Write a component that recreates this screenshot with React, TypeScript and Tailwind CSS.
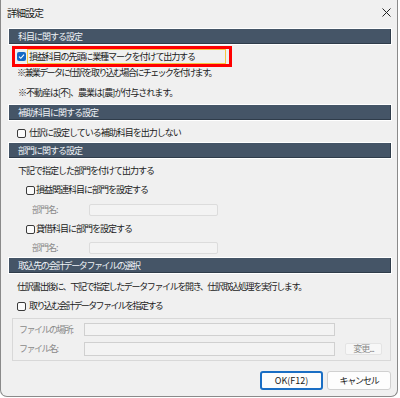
import React from "react";

function Header({ title, tight }: { title: string; tight?: boolean }) {
  return (
    <div
      className={
        "ml-[7px] w-[384px] h-[17px] border border-white bg-[#455567] shadow-[inset_-1px_-1px_0_#2f3c4a] flex items-center pl-[9px] text-[#eef2f6] text-[9px] leading-[12px] " +
        (tight ? "tracking-[-1.4px]" : "tracking-[-1px]")
      }
    >
      {title}
    </div>
  );
}

function Box({ checked }: { checked?: boolean }) {
  if (checked) {
    return (
      <div className="w-[9px] h-[9px] rounded-[2px] bg-[#1668c4] flex items-center justify-center shrink-0">
        <svg width="7" height="7" viewBox="0 0 7 7">
          <path d="M1 3.6 L2.8 5.3 L6 1.6" stroke="white" strokeWidth="1.1" fill="none" />
        </svg>
      </div>
    );
  }
  return <div className="w-[9px] h-[9px] rounded-[2px] border border-[#3a3a3a] bg-[#fbfbfb] shrink-0" />;
}

export default function App() {
  return (
    <div className="w-[400px] h-[398px] bg-white font-['Noto_Sans_CJK_JP',sans-serif] text-[#1a1a1a]">
      <div className="w-[398px] h-[397px] bg-[#f0f0f0] border-l border-r border-b border-[#8a8a8a] rounded-b-[7px] flex flex-col">
        {/* title */}
        <div className="h-[25px] flex items-center justify-between pl-[6px] pr-[5px]">
          <span className="text-[10px] tracking-[-1px] leading-[12px] text-[#1a1a1a]">詳細設定</span>
          <svg width="9" height="9" viewBox="0 0 9 9" className="mr-[1px]">
            <path d="M0.5 0.5 L8.5 8.5 M8.5 0.5 L0.5 8.5" stroke="#222" strokeWidth="1" />
          </svg>
        </div>

        <div className="mt-[3px]">
          <Header title="科目に関する設定" />
        </div>

        {/* red highlight */}
        <div className="mt-[1px] ml-[11px] w-[220px] h-[21px] border-[3px] border-[#ff0000] flex items-center pl-[2px]">
          <Box checked />
          <div className="ml-[1px] w-[199px] h-[15px] border border-[#f5c542] flex items-center pl-[1px] text-[9px] tracking-[-1.1px] leading-[12px]">
            損益科目の先頭に業種マークを付けて出力する
          </div>
        </div>

        <div className="h-[12px] ml-[16px] flex items-center text-[9px] tracking-[-1.6px] leading-[12px]">
          ※兼業データに仕訳を取り込む場合にチェックを付けます。
        </div>
        <div className="mt-[8px] h-[12px] ml-[17px] flex items-center text-[9px] tracking-[-1px] leading-[12px]">
          ※不動産は[不]、農業は[農]が付与されます。
        </div>

        <div className="mt-[5px]">
          <Header title="補助科目に関する設定" />
        </div>
        <div className="mt-[5px] h-[14px] ml-[16px] flex items-center gap-[3px] text-[9px] tracking-[-1px] leading-[12px]">
          <Box />
          <span>仕訳に設定している補助科目を出力しない</span>
        </div>

        <div className="mt-[2px]">
          <Header title="部門に関する設定" />
        </div>
        <div className="mt-[5px] h-[14px] ml-[17px] flex items-center text-[9px] tracking-[-1px] leading-[12px]">
          下記で指定した部門を付けて出力する
        </div>
        <div className="mt-[5px] h-[14px] ml-[25px] flex items-center gap-[1px] text-[9px] tracking-[-1px] leading-[12px]">
          <Box />
          <span>損益関連科目に部門を設定する</span>
        </div>
        <div className="mt-[6px] h-[14px] ml-[31px] flex items-center text-[9px] tracking-[-1px] leading-[12px]">
          <span className="w-[57px] text-[#8a8a8a]">部門名:</span>
          <div className="w-[129px] h-[12px] border border-[#dcdcdc] rounded-[2px] bg-[#f3f3f3]" />
        </div>
        <div className="mt-[5px] h-[14px] ml-[25px] flex items-center gap-[1px] text-[9px] tracking-[-1px] leading-[12px]">
          <Box />
          <span>貸借科目に部門を設定する</span>
        </div>
        <div className="mt-[5px] h-[14px] ml-[31px] flex items-center text-[9px] tracking-[-1px] leading-[12px]">
          <span className="w-[57px] text-[#8a8a8a]">部門名:</span>
          <div className="w-[129px] h-[12px] border border-[#dcdcdc] rounded-[2px] bg-[#f3f3f3]" />
        </div>

        <div className="mt-[2px]">
          <Header title="取込先の会計データファイルの選択" tight />
        </div>
        <div className="mt-[6px] h-[14px] ml-[16px] flex items-center text-[9px] tracking-[-1.35px] leading-[12px]">
          仕訳書出後に、下記で指定したデータファイルを開き、仕訳取込処理を実行します。
        </div>
        <div className="mt-[5px] h-[14px] ml-[16px] flex items-center gap-[3px] text-[9px] tracking-[-1.6px] leading-[12px]">
          <Box />
          <span>取り込む会計データファイルを指定する</span>
        </div>

        {/* group box */}
        <div className="mt-[5px] ml-[11px] w-[379px] h-[43px] border border-[#d8d8d8] flex flex-col pt-[4px] text-[9px] tracking-[-1.5px] leading-[12px] text-[#8a8a8a]">
          <div className="h-[13px] flex items-center">
            <span className="w-[71px] pl-[6px]">ファイルの場所:</span>
            <div className="w-[251px] h-[13px] border border-[#d0d0d0] bg-[#f3f3f3]" />
          </div>
          <div className="mt-[6px] h-[14px] flex items-center">
            <span className="w-[71px] pl-[6px]">ファイル名:</span>
            <div className="w-[251px] h-[14px] border border-[#d0d0d0] bg-[#f3f3f3]" />
            <div className="ml-[10px] w-[37px] h-[12px] bg-[#f7f7f7] border border-[#e4e4e4] rounded-[2px] flex items-center justify-center text-[#8a8a8a] tracking-[-1px]">
              変更...
            </div>
          </div>
        </div>

        {/* buttons */}
        <div className="mt-[10px] flex justify-end gap-[4px] pr-[6px]">
          <div className="w-[63px] h-[19px] rounded-[3px] border-2 border-[#1a6ec4] bg-[#fdfdfd] flex items-center justify-center text-[9px] leading-[12px]">
            OK(F12)
          </div>
          <div className="w-[64px] h-[19px] rounded-[3px] border border-[#d0d0d0] bg-[#fdfdfd] flex items-center justify-center text-[9px] tracking-[-1.2px] leading-[12px]">
            キャンセル
          </div>
        </div>
      </div>
    </div>
  );
}
